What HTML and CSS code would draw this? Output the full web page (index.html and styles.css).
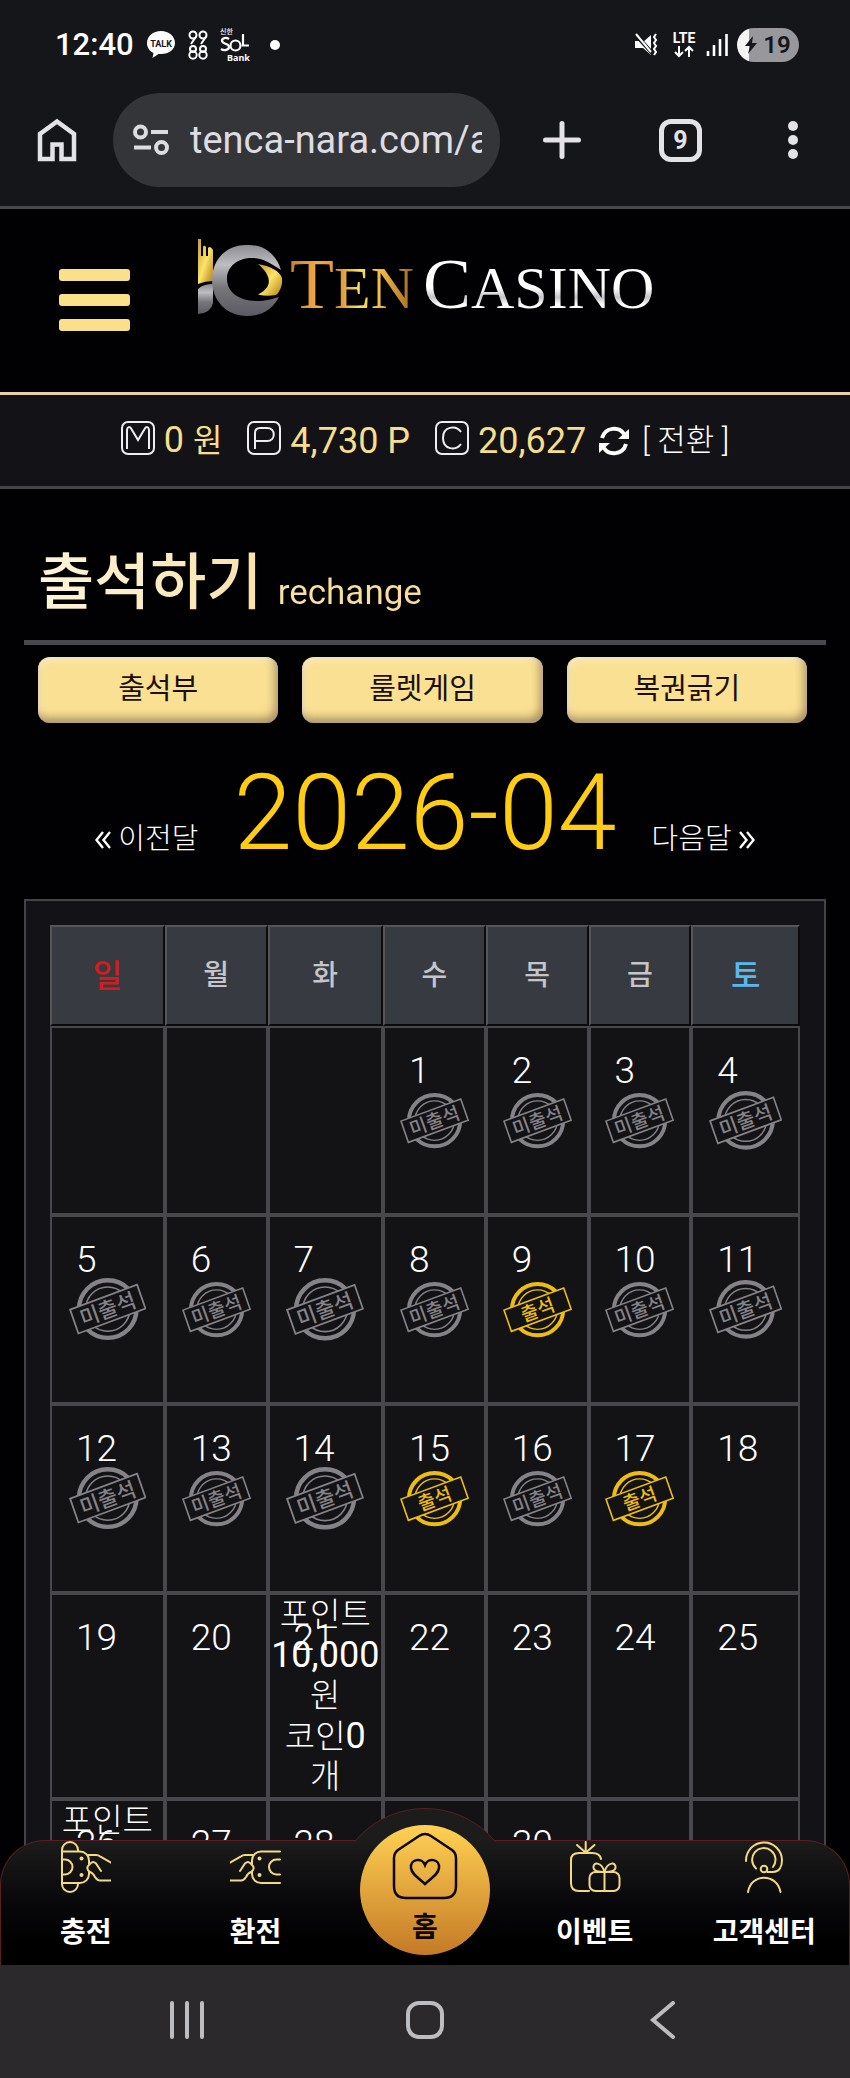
FILE: index.html
```html
<!DOCTYPE html>
<html lang="ko">
<head>
<meta charset="utf-8">
<meta name="viewport" content="width=device-width, initial-scale=1">
<title>Ten Casino</title>
<link rel="stylesheet" href="styles.css">
</head>
<body>
<svg class="defs" aria-hidden="true">
  <defs>
    <symbol id="stamp-absent" viewBox="0 0 70 58">
      <g class="stamp-lines">
        <circle cx="35" cy="29" r="26" stroke-width="4"/>
        <circle cx="35" cy="29" r="20" stroke-width="1.4"/>
        <path class="stamp-band" d="M1 29.5 61.5 7 69 28.500 8.500 51z" stroke-width="1.6"/>
      </g>
      <text class="stamp-text" x="35" y="36" transform="rotate(-20 35 29)">미출석</text>
    </symbol>
    <symbol id="stamp-present" viewBox="0 0 70 58">
      <g class="stamp-lines">
        <circle cx="35" cy="29" r="26" stroke-width="4"/>
        <circle cx="35" cy="29" r="20" stroke-width="1.4"/>
        <path class="stamp-band" d="M1 29.5 61.5 7 69 28.500 8.500 51z" stroke-width="1.6"/>
      </g>
      <text class="stamp-text" x="35" y="36" transform="rotate(-20 35 29)">출석</text>
    </symbol>
    <symbol id="hand" viewBox="0 0 50 50">
      <path d="M27 13h8c2 0 3 .5 4.500 1.700l10.500 6M29 22c2-3 4-2.500 6-.500l5 7.500M29 22c-4 3-3 6 0 8 3 1 4 3 5 5 1.500 2.500 3 3.500 5 3.500h11"/>
    </symbol>
  </defs>
</svg>

<header class="device">
  <div class="status">
    <div class="status-group">
      <span class="clock">12:40</span>
      <svg class="talk" viewBox="0 0 30 30"><path d="M15 1C7 1 1 6 1 13c0 4.500 2.500 8 6.500 10L6.500 28l6-4h2.500c8 0 14-4.500 14-11S23 1 15 1z" fill="#fff"/><text x="15" y="16.500" text-anchor="middle" class="talk-text">TALK</text></svg>
      <svg class="n9988" viewBox="0 0 20 30" fill="none" stroke="#fff" stroke-width="2"><circle cx="5" cy="5" r="3.500"/><circle cx="15" cy="5" r="3.500"/><path d="M8.500 6 3 14M18.500 6 13 14"/><circle cx="5" cy="19" r="3"/><circle cx="15" cy="19" r="3"/><circle cx="5" cy="25" r="3.700"/><circle cx="15" cy="25" r="3.700"/></svg>
      <svg class="sol" viewBox="0 0 32 36"><text x="0" y="7" class="sol-ko">신한</text><g fill="none" stroke="#fff" stroke-width="2.200"><path d="M9 12c-3-2-7-1-7 1.500 0 4 7 2.500 7 6.500 0 3-5 4-8 2"/><circle cx="15.500" cy="18.500" r="5"/><path d="M23 7v11.500h6"/></g><text x="7" y="34" class="sol-en">Bank</text></svg>
      <span class="dot"></span>
    </div>
    <div class="status-group right">
      <svg class="mute" viewBox="0 0 24 24"><path d="M1 8h4l3 2 9-8v20L9 15H1z" fill="#fff"/><path d="M1 1l18 20" stroke="#15161a" stroke-width="4"/><path d="M2 1l15 18M22 1l-2 3 2 3-2 3 2 3-2 3 2 3-2 3" fill="none" stroke="#fff" stroke-width="2"/></svg>
      <svg class="lte" viewBox="0 0 26 28"><text x="13" y="12" text-anchor="middle" class="lte-text">LTE</text><path d="M8 15v10M4 21l4 4 4-4M18 26V16M14 20l4-4 4 4" fill="none" stroke="#fff" stroke-width="2"/></svg>
      <svg class="signal" viewBox="0 0 22 24"><path d="M2 18v5M8 12v11M14 6v17M20.500 1v22" stroke="#fff" stroke-width="2.600"/></svg>
      <span class="battery"><svg viewBox="0 0 12 18"><path d="M8 0 0 10h5l-2 8 9-11H7z" fill="#15161a"/></svg>19</span>
    </div>
  </div>
  <div class="toolbar">
    <button class="tool" aria-label="Home"><svg width="40" height="44" viewBox="0 0 40 44"><path d="M3 41V16L20 3.500 37 16v25H24.500V26.500h-9V41z" fill="none" stroke="#e3e2e6" stroke-width="4.500"/></svg></button>
    <label class="address">
      <svg width="36" height="32" viewBox="0 0 36 32" fill="none" stroke="#dddce1" stroke-width="4"><circle cx="7.500" cy="8" r="5.500"/><path d="M18 8h17M1 23.500h17"/><circle cx="28.500" cy="23.500" r="5.500"/></svg>
      <input class="url" type="text" value="tenca-nara.com/a" aria-label="Address">
    </label>
    <button class="tool" aria-label="New tab"><svg width="38" height="38" viewBox="0 0 38 38"><path d="M19 2.500v33M2.500 19h33" stroke="#e3e2e6" stroke-width="5" stroke-linecap="round"/></svg></button>
    <button class="tool tabs" aria-label="Tabs">9</button>
    <button class="tool" aria-label="More"><svg width="10" height="38" viewBox="0 0 10 38" fill="#e3e2e6"><circle cx="5" cy="5" r="5"/><circle cx="5" cy="19" r="5"/><circle cx="5" cy="33" r="5"/></svg></button>
  </div>
</header>

<div class="page">
  <header class="site">
    <button class="burger" aria-label="Menu"><span></span><span></span><span></span></button>
    <a class="logo" href="#" aria-label="Ten Casino">
      <svg class="logo-mark" viewBox="0 0 86 78">
        <defs>
          <linearGradient id="silver" x1="0" y1="0" x2="0" y2="1"><stop offset="0" stop-color="#8d8c90"/><stop offset=".28" stop-color="#bebdc1"/><stop offset=".6" stop-color="#77767b"/><stop offset="1" stop-color="#5b5a60"/></linearGradient>
          <linearGradient id="gold" x1="0" y1="0" x2="1" y2="1"><stop offset="0" stop-color="#c79a2c"/><stop offset=".5" stop-color="#fbe469"/><stop offset="1" stop-color="#b27c17"/></linearGradient>
        </defs>
        <path d="M1 0h3v17h2V8q1-3 3 0v9h2V9q2-3 5 2v31q-8 0-15 3z" fill="url(#gold)"/>
        <path d="M1 50q5-5 15-5v19Q14 74 1 75z" fill="url(#silver)"/>
        <path d="M84 31C79 14 65 5 49 6 28 6 15 22 15 41c0 21 15 36 35 36 15 0 26-7 32-19-7 2-13 4-22 4-18 0-30-9-30-22 0-13 11-21 25-21 11 0 19 6 29 12z" fill="url(#silver)"/>
        <path d="M61 25c12 2 22 7 24 14 1 8-3 15-6 17-6 1-12 1-18-.500C77 48 74 36 61 25z" fill="url(#gold)"/>
      </svg>
      <span class="word gold-word"><span class="cap">T</span>EN</span>
      <span class="word silver-word"><span class="cap">C</span>ASINO</span>
    </a>
  </header>

  <div class="wallet">
    <span class="purse"><svg class="badge" viewBox="0 0 34 34"><rect x="1" y="1" width="32" height="32" rx="6"/><path d="M6 28V10c0-5 3-5 5-1l6 10 6-10c2-4 5-4 5 1v18"/></svg><b>0 <span class="ko">원</span></b></span>
    <span class="purse"><svg class="badge" viewBox="0 0 34 34"><rect x="1" y="1" width="32" height="32" rx="6"/><path d="M8 28V12q0-5 5-5h7c9 0 9 13 0 13H8"/></svg><b>4,730 P</b></span>
    <span class="purse"><svg class="badge" viewBox="0 0 34 34"><rect x="1" y="1" width="32" height="32" rx="6"/><path d="M26 11C21 4 8 5 8 17s13 13 18 6"/></svg><b>20,627</b></span>
    <button class="convert"><svg width="30" height="30" viewBox="0 0 30 30"><path d="M3 12C6 1 20 0 25 8M27 18C24 29 10 30 5 22" fill="none" stroke="#fff" stroke-width="4"/><path d="M30 3v10H19zM0 27V17h11z" fill="#fff"/></svg><span>[ 전환 ]</span></button>
  </div>

  <main class="content">
    <h1 class="title">출석하기 <small>rechange</small></h1>
    <nav class="actions">
      <button>출석부</button>
      <button>룰렛게임</button>
      <button>복권긁기</button>
    </nav>
    <div class="month">
      <a href="#"><svg width="16" height="18" viewBox="0 0 16 18"><path d="M8 1 1.500 9 8 17M15 1 8.500 9 15 17"/></svg> 이전달</a>
      <h2>2026-04</h2>
      <a href="#">다음달 <svg width="16" height="18" viewBox="0 0 16 18"><path d="M1 1l6.500 8L1 17M8 1l6.500 8L8 17"/></svg></a>
    </div>
    <section class="panel">
      <table class="calendar">
        <colgroup><col class="c-sun"><col class="c-day"><col class="c-tue"><col class="c-day"><col class="c-day"><col class="c-day"><col class="c-sat"></colgroup>
        <thead><tr><th class="sun">일</th><th>월</th><th>화</th><th>수</th><th>목</th><th>금</th><th class="sat">토</th></tr></thead>
        <tbody>
          <tr>
            <td></td><td></td><td></td>
            <td><span class="num">1</span><svg class="stamp"><use href="#stamp-absent"/></svg></td>
            <td><span class="num">2</span><svg class="stamp"><use href="#stamp-absent"/></svg></td>
            <td><span class="num">3</span><svg class="stamp"><use href="#stamp-absent"/></svg></td>
            <td><span class="num">4</span><svg class="stamp"><use href="#stamp-absent"/></svg></td>
          </tr>
          <tr>
            <td><span class="num">5</span><svg class="stamp"><use href="#stamp-absent"/></svg></td>
            <td><span class="num">6</span><svg class="stamp"><use href="#stamp-absent"/></svg></td>
            <td><span class="num">7</span><svg class="stamp"><use href="#stamp-absent"/></svg></td>
            <td><span class="num">8</span><svg class="stamp"><use href="#stamp-absent"/></svg></td>
            <td><span class="num">9</span><svg class="stamp present"><use href="#stamp-present"/></svg></td>
            <td><span class="num">10</span><svg class="stamp"><use href="#stamp-absent"/></svg></td>
            <td><span class="num">11</span><svg class="stamp"><use href="#stamp-absent"/></svg></td>
          </tr>
          <tr>
            <td><span class="num">12</span><svg class="stamp"><use href="#stamp-absent"/></svg></td>
            <td><span class="num">13</span><svg class="stamp"><use href="#stamp-absent"/></svg></td>
            <td><span class="num">14</span><svg class="stamp"><use href="#stamp-absent"/></svg></td>
            <td><span class="num">15</span><svg class="stamp present"><use href="#stamp-present"/></svg></td>
            <td><span class="num">16</span><svg class="stamp"><use href="#stamp-absent"/></svg></td>
            <td><span class="num">17</span><svg class="stamp present"><use href="#stamp-present"/></svg></td>
            <td><span class="num">18</span></td>
          </tr>
          <tr class="tall">
            <td><span class="num">19</span></td>
            <td><span class="num">20</span></td>
            <td class="prize"><span class="num">21</span>포인트<br><b>10,000</b><br>원<br>코인<b>0</b><br>개</td>
            <td><span class="num">22</span></td>
            <td><span class="num">23</span></td>
            <td><span class="num">24</span></td>
            <td><span class="num">25</span></td>
          </tr>
          <tr class="tall">
            <td class="prize"><span class="num">26</span>포인트</td>
            <td><span class="num">27</span></td>
            <td><span class="num">28</span></td>
            <td></td>
            <td><span class="num">30</span></td>
            <td></td><td></td>
          </tr>
        </tbody>
      </table>
    </section>
  </main>

  <nav class="tabbar">
    <span class="dome"></span>
    <a href="#"><svg class="tab-icon" viewBox="0 0 50 50"><path d="M1 9V42M1 9.500V8a8 8 0 0 1 16 0v1.500M1 9.500h18a9 9 0 0 1 9 9V22M28 30v2a9 9 0 0 1-9 9H1v1a8 8 0 0 0 16 0v-1M1 17.500h3a7.500 7.500 0 0 1 0 15H1"/><circle class="pip" cx="20.500" cy="16.500" r="2"/><circle class="pip" cx="20.500" cy="33" r="2"/><use href="#hand"/></svg><span>충전</span></a>
    <a href="#"><svg class="tab-icon" viewBox="0 0 50 50"><path d="M50 9.500H31a9 9 0 0 0-9 9V22M22 30v2a9 9 0 0 0 9 9h19M50 17.500h-3.500a7.500 7.500 0 0 0 0 15H50"/><circle class="pip" cx="29.500" cy="16.500" r="2"/><circle class="pip" cx="29.500" cy="33" r="2"/><use href="#hand" transform="translate(50 0) scale(-1 1)"/></svg><span>환전</span></a>
    <a href="#" class="home"><svg viewBox="0 0 66 68"><path d="M27 4q6-4 12 0l21 14q4 3 4 8v28q0 12-12 12H14Q2 66 2 54V26q0-5 4-8z"/><path d="M33 33c-3-8-15-6-14 3 1 7 8 10 14 16 6-6 13-9 14-16 1-9-11-11-14-3z"/></svg><span>홈</span></a>
    <a href="#"><svg class="tab-icon" viewBox="0 0 50 50"><path d="M19 49H9q-8 0-8-8V18q0-7 8-7h13q8 0 9 6M15.700 10V0M15 10 7 3M16.500 10l8-7"/><rect x="19.500" y="30" width="30" height="19" rx="6"/><path d="M34.500 49V30c-3-11-12-10-11-4 .5 3 4 4 11 4 7 0 10.500-1 11-4 1-6-8-7-11 4"/></svg><span>이벤트</span></a>
    <a href="#"><svg class="tab-icon" viewBox="0 0 50 50"><path d="M7 19a18 18 0 0 1 36-1c0 7-3 12-9 12h-5.500M17 26.500a11.700 11.700 0 1 1 17-1.500M9 50c3-19 29-19 32.500 0"/><circle cx="25" cy="27" r="3.300"/></svg><span>고객센터</span></a>
  </nav>
</div>

<footer class="sysnav">
  <button aria-label="Recents"><svg width="38" height="38" viewBox="0 0 38 38"><path d="M4 2v34M19 2v34M34 2v34"/></svg></button>
  <button aria-label="Home"><svg width="38" height="38" viewBox="0 0 38 38"><rect x="2" y="2" width="34" height="34" rx="11"/></svg></button>
  <button aria-label="Back"><svg width="38" height="38" viewBox="0 0 38 38"><path d="M29 2 9 19l20 17"/></svg></button>
</footer>
</body>
</html>
```

FILE: styles.css
```css
* { box-sizing: border-box; }

body {
  margin: 0;
  height: 100vh;
  display: flex;
  flex-direction: column;
  background: #010002;
  color: #fff;
  font-family: Roboto, "Noto Sans CJK KR", sans-serif;
}

button {
  border: 0;
  padding: 0;
  background: none;
  color: inherit;
  font: inherit;
}

a { color: inherit; text-decoration: none; }
svg { display: block; flex: none; }
.defs { position: absolute; width: 0; height: 0; }

/* device status and browser toolbar */
.device {
  flex: none;
  background: #15161a;
  border-bottom: 3px solid #47464a;
}

.status {
  display: flex;
  justify-content: space-between;
  align-items: center;
  height: 93px;
  padding: 0 51px 4px 55px;
}

.status-group { display: flex; align-items: center; gap: 12px; }
.status-group.right { gap: 9px; }
.clock { font-size: 31px; font-weight: 500; line-height: 40px; }
.talk { width: 30px; height: 30px; }
.talk-text { font: 700 9px Roboto, sans-serif; fill: #15161a; }
.n9988 { width: 20px; height: 30px; }
.sol { width: 32px; height: 36px; }
.sol-ko { font: 500 7px "Noto Sans CJK KR", sans-serif; fill: #fff; }
.sol-en { font: 700 9px "Noto Sans", sans-serif; fill: #fff; }
.dot { width: 10px; height: 10px; margin-left: 6px; border-radius: 50%; background: #fff; }
.mute { width: 24px; height: 24px; margin-right: 4px; }
.lte { width: 26px; height: 28px; }
.lte-text { font: 700 14px Roboto, sans-serif; fill: #fff; }
.signal { width: 22px; height: 24px; }

.battery {
  display: flex;
  align-items: center;
  justify-content: center;
  gap: 6px;
  width: 62px;
  height: 34px;
  border-radius: 17px;
  background: linear-gradient(90deg, #f4f4f5 12px, #98979c 12px);
  color: #15161a;
  font-size: 24px;
  font-weight: 600;
}
.battery svg { width: 12px; height: 18px; }

.toolbar {
  display: flex;
  align-items: center;
  height: 113px;
  padding: 0 52px 19px 37px;
}

.tool { display: flex; align-items: center; justify-content: center; }

.address {
  flex: 1;
  display: flex;
  align-items: center;
  gap: 21px;
  height: 94px;
  min-width: 0;
  margin: 0 43px 0 36px;
  padding: 0 18px 0 20px;
  border-radius: 47px;
  background: #343539;
}

.url {
  flex: 1;
  min-width: 0;
  padding: 0;
  border: 0;
  outline: 0;
  background: none;
  color: #dddce1;
  font: 400 38px/48px Roboto, sans-serif;
}

.tabs {
  width: 43px;
  height: 43px;
  margin: 0 86px 0 78px;
  border: 5px solid #e3e2e6;
  border-radius: 12px;
  color: #e3e2e6;
  font-size: 25px;
  font-weight: 700;
}

/* page viewport */
.page {
  position: relative;
  flex: 1;
  min-height: 0;
  overflow: hidden;
}

.site {
  display: flex;
  align-items: flex-start;
  gap: 67px;
  height: 186px;
  padding: 30px 59px 0;
  border-bottom: 3px solid #eccfa2;
}

.burger { display: grid; gap: 13px; width: 71px; margin-top: 30px; }
.burger span { height: 12px; border-radius: 3px; background: #fbe08c; }

.logo { display: flex; align-items: flex-start; }
.logo-mark { width: 86px; height: 78px; margin-right: 7px; }

.word {
  margin-right: 9px;
  font: 60px/90px "Liberation Serif", serif;
  background-clip: text;
  -webkit-background-clip: text;
  color: transparent;
}
.cap { font-size: 72px; }
.gold-word { background-image: linear-gradient(90deg, #c8812b, #f2a947 22%, #dc9436 40%, #fbe05c 56%, #f0b544 75%, #9c6420); }
.silver-word { background-image: linear-gradient(180deg, #fff 52%, #c4c3c9 62%, #fff 70%); }

.wallet {
  display: flex;
  align-items: center;
  justify-content: center;
  height: 94px;
  background: #131216;
  border-bottom: 3px solid #454448;
}

.purse { display: flex; align-items: center; gap: 9px; margin-right: 25px; }
.purse:nth-of-type(3) { margin-right: 13px; }
.purse b { color: #f7de8b; font-size: 36px; font-weight: 400; line-height: 44px; }
.purse .ko { font-size: 32px; }
.badge { width: 34px; height: 34px; margin-top: -6px; fill: none; stroke: #eeedf2; stroke-width: 2; }
.convert { display: flex; align-items: center; gap: 13px; font-size: 31px; font-weight: 300; line-height: 44px; }

/* attendance page */
.content { padding: 0 24px; }

.title {
  margin: 0;
  padding: 47px 14px 0;
  border-bottom: 5px solid #48474b;
  font-size: 61px;
  font-weight: 500;
  line-height: 94px;
  background: linear-gradient(90deg, #fdf6dc, #f7dc9b 320px);
  background-clip: text;
  -webkit-background-clip: text;
  color: transparent;
}
.title small { font-size: 35px; font-weight: 400; }

.actions {
  display: grid;
  grid-template-columns: repeat(3, 1fr);
  gap: 24px;
  padding: 12px 19px 0 14px;
}

.actions button {
  height: 66px;
  padding-bottom: 8px;
  border-radius: 12px;
  background: #f9e092;
  box-shadow: inset -3px -5px 8px rgba(90, 65, 50, .5), inset 2px 3px 6px rgba(255, 245, 225, .7);
  color: #1b0f0a;
  font-size: 29px;
  font-weight: 400;
}

.month {
  display: flex;
  justify-content: center;
  align-items: baseline;
  gap: 35px;
  height: 176px;
  padding-top: 28px;
}
.month h2 { margin: 0; color: #ffcc14; font-size: 106px; font-weight: 300; line-height: 124px; }
.month a { font-size: 29px; font-weight: 300; }
.month svg { display: inline-block; fill: none; stroke: #fff; stroke-width: 2.4; }

.panel {
  padding: 24px;
  border: 2px solid #444347;
  background: #131216;
}

.calendar {
  width: 100%;
  table-layout: fixed;
  border-collapse: separate;
  border-spacing: 0;
}
.c-sun { width: 15.3%; }
.c-day { width: 13.7%; }
.c-tue { width: 15.4%; }
.c-sat { width: 14.5%; }

.calendar th {
  height: 101px;
  padding: 0 0 6px;
  border: 2px solid;
  border-color: #55555a #0b0a0d #0b0a0d #55555a;
  background: #383a41;
  color: #c5c5ca;
  font-size: 28px;
  font-weight: 500;
}
.calendar .sun { color: #d51c1c; font-size: 32px; }
.calendar .sat { color: #5bb8ee; font-size: 32px; }

.calendar td {
  position: relative;
  height: 189px;
  padding: 0;
  border: 2px solid #48474b;
  background: #131215;
  text-align: center;
  vertical-align: middle;
}
.calendar .tall td { height: 206px; }

.num {
  position: absolute;
  top: 22px;
  left: 24px;
  font-size: 37px;
  font-weight: 300;
  line-height: 42px;
}

.stamp {
  width: 70%;
  aspect-ratio: 70 / 58;
  margin: 0 auto;
  color: #858387;
}
.stamp.present { color: #edbd16; }
.stamp-lines { fill: none; stroke: currentColor; }
.stamp-band { fill: #131215; }
.stamp-text { font: 500 19px "Noto Sans CJK KR", sans-serif; fill: currentColor; text-anchor: middle; }

.calendar .prize {
  vertical-align: top;
  font-size: 33px;
  font-weight: 300;
  line-height: 40px;
}
.prize b { font-size: 36px; font-weight: 400; line-height: 40px; }

/* floating site tab bar */
.tabbar {
  position: absolute;
  left: 0;
  right: 0;
  bottom: 0;
  display: flex;
  height: 125px;
  border: 1px solid #5a1f25;
  border-bottom: 0;
  border-radius: 45px 45px 0 0;
  background: linear-gradient(#1c1c1c, #08070a 50%, #000 85%);
}

.tabbar a {
  position: relative;
  flex: 1;
  display: flex;
  flex-direction: column;
  align-items: center;
  gap: 21px;
  font-size: 28px;
  font-weight: 700;
  line-height: 40px;
}

.tab-icon {
  width: 50px;
  height: 50px;
  margin-top: 1px;
  overflow: visible;
  fill: none;
  stroke: #f3d983;
  stroke-width: 2;
  stroke-linecap: round;
}
.pip { fill: #f3d983; stroke: none; }

.dome {
  position: absolute;
  left: 50%;
  top: -33px;
  width: 184px;
  height: 184px;
  margin-left: -92px;
  border: 1px solid #5a1f25;
  border-radius: 50%;
  background: #1c1c1c;
  clip-path: inset(0 0 150px 0);
}

.tabbar .home { gap: 8px; color: #0d0703; }
.home::before {
  content: "";
  position: absolute;
  top: -16px;
  left: calc(50% - 65px);
  width: 130px;
  height: 130px;
  border-radius: 50%;
  background: linear-gradient(#ffd153, #c47a26);
}
.home svg {
  position: relative;
  width: 66px;
  height: 68px;
  margin-top: -9px;
  fill: none;
  stroke: #0d0703;
  stroke-width: 2.5;
}
.home span { position: relative; }

/* system navigation */
.sysnav {
  flex: none;
  display: flex;
  justify-content: center;
  gap: 200px;
  height: 113px;
  padding-top: 36px;
  background: #2b292c;
}
.sysnav button { align-self: flex-start; }
.sysnav svg { fill: none; stroke: #bdbcc0; stroke-width: 4; stroke-linecap: round; }
```
